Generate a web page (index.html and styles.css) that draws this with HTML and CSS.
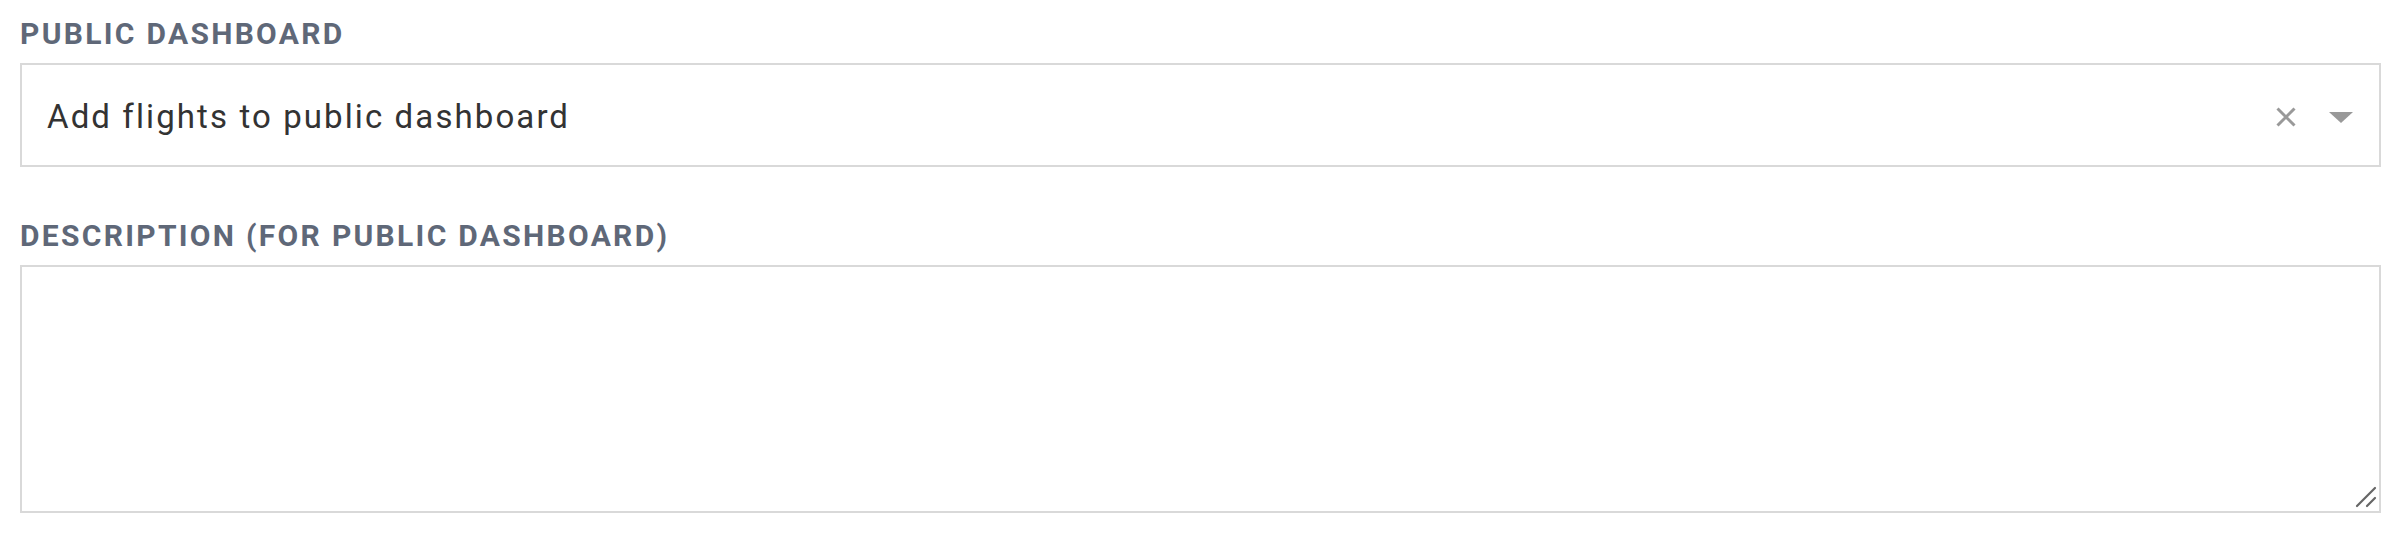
FILE: index.html
```html
<!DOCTYPE html>
<html lang="en">
<head>
    <meta charset="UTF-8">
    <title>Public dashboard</title>
    <link rel="stylesheet" href="styles.css">
</head>
<body>
    <div class="form">
        <!-- Public dashboard select -->
        <div class="field">
            <label class="field-label">Public Dashboard</label>
            <div class="select">
                <span class="select-value">Add flights to public dashboard</span>
                <span class="select-clear">
                    <svg width="20" height="20" viewBox="0 0 20 20">
                        <path d="M1.5 1.5 L18.5 18.5 M18.5 1.5 L1.5 18.5" stroke="#999" stroke-width="3" fill="none"/>
                    </svg>
                </span>
                <span class="select-arrow"></span>
            </div>
        </div>

        <!-- Description -->
        <div class="field">
            <label class="field-label" for="description">Description (for public dashboard)</label>
            <div class="textarea-wrap">
                <textarea id="description" class="textarea"></textarea>
                <svg class="resize-handle" width="22" height="22" viewBox="0 0 22 22">
                    <path d="M2 20 L20 2 M12 20 L20 12" stroke="#666" stroke-width="2.2" stroke-linecap="round" fill="none"/>
                </svg>
            </div>
        </div>
    </div>
</body>
</html>
```

FILE: styles.css
```css
body {
    margin: 0;
    padding: 16px 24px 0 20px;
    font-family: Roboto, "Liberation Sans", sans-serif;
    background: #fff;
}
.field {
    margin-bottom: 51px;
}
.field:last-child {
    margin-bottom: 0;
}
.field-label {
    display: block;
    font-size: 30px;
    line-height: 36px;
    font-weight: bold;
    text-transform: uppercase;
    letter-spacing: 2.3px;
    color: #5f6878;
    margin-bottom: 11px;
}
.select {
    display: flex;
    align-items: center;
    height: 104px;
    box-sizing: border-box;
    border: 2px solid #d9d9d9;
    padding: 4px 26px 0 25px;
}
.select-value {
    flex: 1;
    font-size: 33px;
    line-height: 40px;
    letter-spacing: 2.1px;
    color: #333;
}
.select-clear {
    display: flex;
    margin-right: 33px;
}
.select-arrow {
    width: 0;
    height: 0;
    border-left: 12px solid transparent;
    border-right: 12px solid transparent;
    border-top: 11px solid #999;
}
.textarea-wrap {
    position: relative;
}
.textarea {
    display: block;
    width: 100%;
    height: 248px;
    box-sizing: border-box;
    border: 2px solid #d9d9d9;
    margin: 0;
    padding: 10px 25px;
    font-family: inherit;
    font-size: 33px;
    outline: none;
    resize: none;
}
.resize-handle {
    position: absolute;
    right: 4px;
    bottom: 5px;
}
```
